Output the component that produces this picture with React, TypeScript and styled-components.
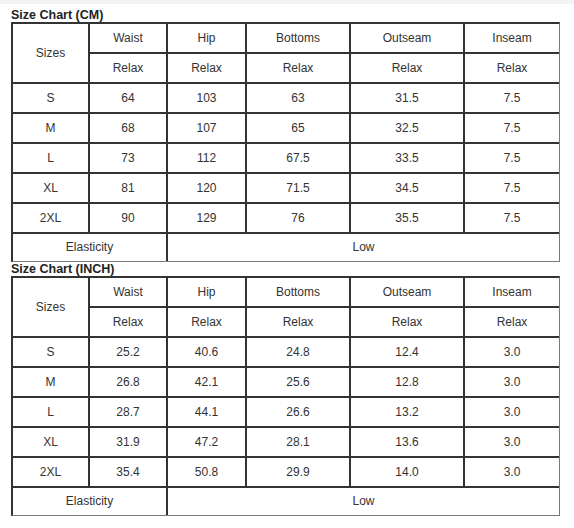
import React from "react";
import styled, { createGlobalStyle } from "styled-components";

const GlobalStyle = createGlobalStyle`
  html, body {
    margin: 0;
    padding: 0;
    background: #ffffff;
  }
  body {
    font-family: "Liberation Sans", Arial, sans-serif;
  }
`;

// Thin grey band along the top edge
const TopStrip = styled.div`
  height: 4px;
  background: #f3f3f3;
`;

const Page = styled.div`
  padding: 4px 0 0 11px;
`;

const Title = styled.div`
  font-size: 12.5px;
  font-weight: bold;
  line-height: 14px;
  color: #222;
`;

const Table = styled.table`
  width: 549px;
  table-layout: fixed;
  border-collapse: separate;
  border-spacing: 0;
  border-left: 2px solid #333;
  border-top: 2px solid #333;
  border-right: 1px solid #7a7a7a;
  border-bottom: 1px solid #7a7a7a;

  tr:last-child td {
    border-bottom: none;
    height: 27px;
  }
`;

const Cell = styled.td`
  padding: 0 0 1px;
  height: 30px;
  text-align: center;
  vertical-align: middle;
  font-size: 12px;
  color: #333;
  border-right: 2px solid #333;
  border-bottom: 2px solid #333;
  box-sizing: border-box;

  &:last-child {
    border-right: none;
  }
`;

const colWidths = [77, 78, 79, 104, 114, 94];
const headers = ["Waist", "Hip", "Bottoms", "Outseam", "Inseam"];

type Chart = {
  title: string;
  rows: [string, ...string[]][];
};

const charts: Chart[] = [
  {
    title: "Size Chart (CM)",
    rows: [
      ["S", "64", "103", "63", "31.5", "7.5"],
      ["M", "68", "107", "65", "32.5", "7.5"],
      ["L", "73", "112", "67.5", "33.5", "7.5"],
      ["XL", "81", "120", "71.5", "34.5", "7.5"],
      ["2XL", "90", "129", "76", "35.5", "7.5"],
    ],
  },
  {
    title: "Size Chart (INCH)",
    rows: [
      ["S", "25.2", "40.6", "24.8", "12.4", "3.0"],
      ["M", "26.8", "42.1", "25.6", "12.8", "3.0"],
      ["L", "28.7", "44.1", "26.6", "13.2", "3.0"],
      ["XL", "31.9", "47.2", "28.1", "13.6", "3.0"],
      ["2XL", "35.4", "50.8", "29.9", "14.0", "3.0"],
    ],
  },
];

const SizeTable: React.FC<{ chart: Chart }> = ({ chart }) => (
  <>
    <Title>{chart.title}</Title>
    <Table>
      <colgroup>
        {colWidths.map((w, i) => (
          <col key={i} style={{ width: w }} />
        ))}
      </colgroup>
      <tbody>
        <tr>
          <Cell rowSpan={2}>Sizes</Cell>
          {headers.map((h) => (
            <Cell key={h}>{h}</Cell>
          ))}
        </tr>
        <tr>
          {headers.map((h) => (
            <Cell key={h}>Relax</Cell>
          ))}
        </tr>
        {chart.rows.map((row) => (
          <tr key={row[0]}>
            {row.map((v, i) => (
              <Cell key={i}>{v}</Cell>
            ))}
          </tr>
        ))}
        <tr>
          <Cell colSpan={2}>Elasticity</Cell>
          <Cell colSpan={4}>Low</Cell>
        </tr>
      </tbody>
    </Table>
  </>
);

const App: React.FC = () => (
  <>
    <GlobalStyle />
    <TopStrip />
    <Page>
      {charts.map((c) => (
        <SizeTable key={c.title} chart={c} />
      ))}
    </Page>
  </>
);

export default App;
